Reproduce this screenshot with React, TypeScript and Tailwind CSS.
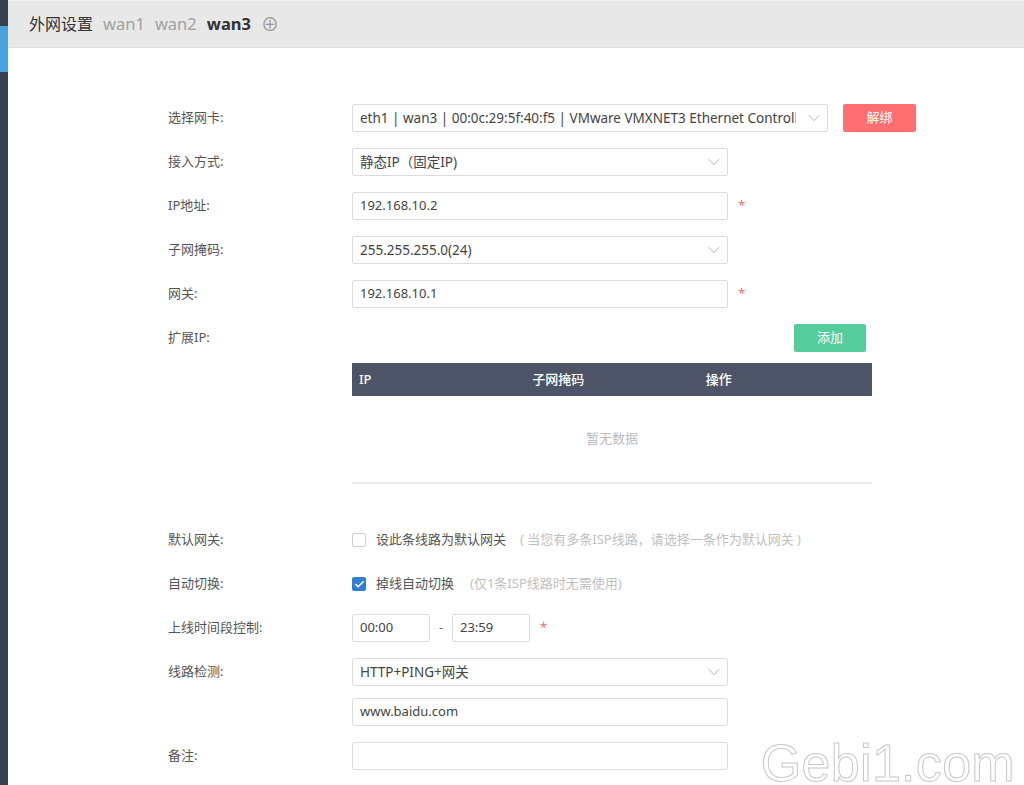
import { ChevronDown, Check } from "lucide-react";

const font = { fontFamily: '"Noto Sans", "Noto Sans CJK SC", sans-serif' };

function Row({
  label,
  children,
  className = "",
}: {
  label?: string;
  children?: React.ReactNode;
  className?: string;
}) {
  return (
    <div className={`flex items-center h-[44px] ${className}`}>
      <div className="w-[184px] shrink-0 text-[13px] text-[#555]">{label}</div>
      <div className="flex items-center">{children}</div>
    </div>
  );
}

function Select({ value, w = "w-[376px]" }: { value: string; w?: string }) {
  return (
    <div
      className={`${w} h-[28px] border border-[#dcdcdc] rounded-[2px] bg-white flex items-center pl-[7px] pr-[3px] text-[13.5px] text-[#444]`}
    >
      <span className="flex-1 overflow-hidden whitespace-nowrap">{value}</span>
      <ChevronDown className="ml-[8px] w-[20px] h-[20px] text-[#a0a0a0] shrink-0" strokeWidth={1} />
    </div>
  );
}

function Input({ value = "", w = "w-[376px]" }: { value?: string; w?: string }) {
  return (
    <div
      className={`${w} h-[28px] border border-[#dcdcdc] rounded-[2px] bg-white flex items-center px-[7px] text-[13px] text-[#444]`}
    >
      {value}
    </div>
  );
}

const Star = () => <span className="ml-[10px] text-[13px] text-[#f56c6c]">*</span>;

export default function App() {
  return (
    <div className="flex w-[1024px] h-[785px] bg-white overflow-hidden relative" style={font}>
      <div className="w-[8px] shrink-0 bg-[#36424f] flex flex-col">
        <div className="h-[26px]" />
        <div className="h-[46px] bg-[#4aa3df]" />
      </div>

      <div className="flex-1 flex flex-col">
        <div className="h-[48px] bg-[#e8e8e8] border-t border-[#f2f2f2] border-b border-b-[#dedede] flex items-center pl-[21px] gap-[10px]">
          <span className="text-[16px] text-[#333]">外网设置</span>
          <span className="text-[16.5px] text-[#a0a0a0]">wan1</span>
          <span className="text-[16.5px] text-[#a0a0a0]">wan2</span>
          <span className="text-[16.5px] text-[#333] font-bold">wan3</span>
          <span className="text-[18px] text-[#999] leading-none">⊕</span>
        </div>

        <div className="pl-[160px] pt-[48px] flex flex-col">
          <Row label="选择网卡:">
            <Select
              w="w-[476px]"
              value="eth1 | wan3 | 00:0c:29:5f:40:f5 | VMware VMXNET3 Ethernet Controller"
            />
            <button className="ml-[15px] w-[73px] h-[28px] rounded-[2px] bg-[#ff6f72] text-white text-[13px]">
              解绑
            </button>
          </Row>
          <Row label="接入方式:">
            <Select value="静态IP（固定IP)" />
          </Row>
          <Row label="IP地址:">
            <Input value="192.168.10.2" />
            <Star />
          </Row>
          <Row label="子网掩码:">
            <Select value="255.255.255.0(24)" />
          </Row>
          <Row label="网关:">
            <Input value="192.168.10.1" />
            <Star />
          </Row>
          <Row label="扩展IP:">
            <div className="w-[514px] flex justify-end">
              <button className="w-[72px] h-[28px] rounded-[2px] bg-[#55cc9c] text-white text-[13px]">
                添加
              </button>
            </div>
          </Row>

          <div className="ml-[184px] w-[520px] mt-[3px]">
            <div className="h-[33px] bg-[#4e5468] grid grid-cols-3 items-center text-[13px] text-white font-medium">
              <span className="pl-[7px]">IP</span>
              <span className="pl-[7px]">子网掩码</span>
              <span className="pl-[7px]">操作</span>
            </div>
            <div className="h-[88px] border-b-2 border-[#ececec] flex items-center justify-center text-[13px] text-[#bbb]">
              暂无数据
            </div>
          </div>

          <div className="h-[34px]" />

          <Row label="默认网关:">
            <span className="w-[14px] h-[14px] border border-[#d0d0d0] rounded-[2px] bg-white" />
            <span className="ml-[10px] text-[13px] text-[#555]">设此条线路为默认网关</span>
            <span className="ml-[14px] text-[13px] text-[#c0c0c0]">( 当您有多条ISP线路，请选择一条作为默认网关 )</span>
          </Row>
          <Row label="自动切换:">
            <span className="w-[14px] h-[14px] rounded-[2px] bg-[#2f7fd6] flex items-center justify-center">
              <Check className="w-[11px] h-[11px] text-white" strokeWidth={3.5} />
            </span>
            <span className="ml-[10px] text-[13px] text-[#555]">掉线自动切换</span>
            <span className="ml-[16px] text-[13px] text-[#c0c0c0]">(仅1条ISP线路时无需使用)</span>
          </Row>
          <Row label="上线时间段控制:">
            <Input value="00:00" w="w-[78px]" />
            <span className="w-[22px] text-center text-[13px] text-[#666]">-</span>
            <Input value="23:59" w="w-[78px]" />
            <Star />
          </Row>
          <Row label="线路检测:">
            <Select value="HTTP+PING+网关" />
          </Row>
          <div className="flex items-center h-[36px]">
            <div className="w-[184px]" />
            <Input value="www.baidu.com" />
          </div>
          <Row label="备注:" className="mt-[4px]">
            <Input />
          </Row>
        </div>
      </div>

      <div
        className="absolute right-[9px] bottom-0 text-[52px] leading-[0.8] tracking-[0.3px] text-transparent"
        style={{ fontFamily: '"Liberation Sans", Arial, sans-serif', WebkitTextStroke: "1px #c8c8c8" }}
      >
        Gebi1.com
      </div>
    </div>
  );
}
